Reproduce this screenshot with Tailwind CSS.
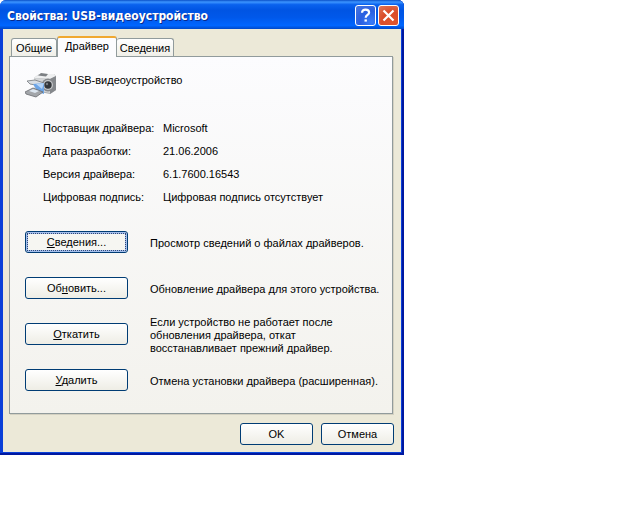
<!DOCTYPE html>
<html lang="ru">
<head>
<meta charset="utf-8">
<meta name="viewport" content="width=device-width, initial-scale=1">
<title>Свойства: USB-видеоустройство</title>
<script src="https://cdn.jsdelivr.net/npm/@tailwindcss/browser@4"></script>
</head>
<body class="bg-white text-black text-[11px] leading-[13px] font-['Liberation_Sans',Arial,sans-serif]">
<main role="dialog" aria-labelledby="title" class="w-full max-w-[404px] rounded-t-md bg-gradient-to-r from-[#0a3fd8] via-[#0a4fe0] to-[#0a3fd8] px-[3px] pb-[3px] shadow-[inset_0_-2px_0_#0018a0,inset_-2px_0_0_#0018a0]">
  <header class="-mx-[3px] flex h-[29px] items-center gap-[2px] rounded-t-md bg-[linear-gradient(to_bottom,#0a50c8_0%,#3c95ff_7%,#0a62ee_16%,#0054e3_35%,#0058ea_60%,#0066ff_88%,#0048c8_100%)] pt-[2px] pr-[5px] pl-[7px]">
    <h1 id="title" class="grow whitespace-nowrap font-['DejaVu_Sans_Condensed','DejaVu_Sans',sans-serif] text-[12px] leading-4 font-bold text-white [text-shadow:1px_1px_0_#0a2a8c]">Свойства: USB-видеоустройство</h1>
    <button type="button" aria-label="Справка" class="grid size-[21px] place-items-center rounded-[3px] border border-white bg-[radial-gradient(circle_at_80%_85%,#3a7cf8,#2a5fe0_50%,#4a78e0)]">
      <svg class="size-[17px]" viewBox="0 0 17 17" fill="none" stroke="#fff" stroke-width="2.2"><path d="M5 5.8C5 3.6 6.500 2.600 8.500 2.600S12.100 3.700 12.100 5.400C12.100 7.800 8.700 7.900 8.700 10.800"/><path d="M7.500 13.500h2.400"/></svg>
    </button>
    <button type="button" aria-label="Закрыть" class="grid size-[21px] place-items-center rounded-[3px] border border-white bg-[radial-gradient(circle_at_70%_85%,#e0552c,#da4d2a_50%,#e07858)]">
      <svg class="size-[17px]" viewBox="0 0 17 17" fill="none" stroke="#fff" stroke-width="2.2"><path d="M3.500 3.500l10 10M13.500 3.500l-10 10"/></svg>
    </button>
  </header>
  <div class="bg-[#ece9d8] px-[6px] pt-[7px] pb-[7px]">
    <div role="tablist" class="flex items-end pl-[2px]">
      <button type="button" role="tab" aria-selected="false" class="h-[18px] w-[46px] rounded-t-[3px] border border-b-0 border-[#919b9c] bg-gradient-to-b from-white to-[#f0efe8] pt-px text-center whitespace-nowrap">Общие</button>
      <button type="button" role="tab" aria-selected="true" class="relative z-10 -mb-px h-[21px] w-[60px] rounded-t-[3px] border border-t-2 border-b-0 border-[#919b9c] border-t-[#f0a830] bg-[#fcfcfe] pb-[3px] text-center whitespace-nowrap">Драйвер</button>
      <button type="button" role="tab" aria-selected="false" class="h-[18px] w-[57px] rounded-t-[3px] border border-b-0 border-l-0 border-[#919b9c] bg-gradient-to-b from-white to-[#f0efe8] pt-px text-center whitespace-nowrap">Сведения</button>
    </div>
    <section role="tabpanel" class="mr-[2px] border border-[#919b9c] bg-gradient-to-b from-[#fcfcfe] to-[#f3f2ed] px-[15px] pb-[10px] shadow-[1px_1px_0_#d4d1c2]">
      <div class="flex gap-3 pt-[15px]">
        <svg class="h-[27px] w-[32px] shrink-0" viewBox="0 0 32 27">
          <path d="M9 6l5-4 15 0 2 2v14l-6 4-15-3z" fill="#a9abae"/>
          <path d="M9 6l5-4 15 0 2 2-6 3z" fill="#eeeff0"/>
          <path d="M9 6l16 1v14l-15-3z" fill="#d3d5d7"/>
          <path d="M31 4v14l-6 4V7z" fill="#85888c"/>
          <path d="M13 3.500l3-2.500 7 1-2 2.500z" fill="#7d8084"/>
          <circle cx="23" cy="13" r="6.500" fill="#85888c"/>
          <circle cx="23" cy="13" r="5" fill="#c5c7c9"/>
          <circle cx="23" cy="13" r="3.700" fill="#33363a"/>
          <circle cx="22" cy="12" r="1.200" fill="#777b80"/>
          <path d="M2 9l8-1 9 3-3 3-11-2z" fill="#d9dee3" stroke="#74777b" stroke-width=".8"/>
          <path d="M8 12l11-1 0 11-6-2z" fill="#6da5e6"/>
          <path d="M11 12l8-1-2 6z" fill="#b7d5f7"/>
          <path d="M0 20l8-4 10 4-7 5-10-3z" fill="#a3a6aa" stroke="#696c70" stroke-width=".8"/>
          <path d="M4 19l4-2 6 2-4 2z" fill="#dce6f0"/>
        </svg>
        <h2 class="pt-[2px]">USB-видеоустройство</h2>
      </div>
      <dl class="mt-[18px] grid auto-rows-[23px] grid-cols-[120px_1fr] items-center pl-[18px] whitespace-nowrap">
        <dt>Поставщик драйвера:</dt><dd>Microsoft</dd>
        <dt>Дата разработки:</dt><dd>21.06.2006</dd>
        <dt>Версия драйвера:</dt><dd>6.1.7600.16543</dd>
        <dt>Цифровая подпись:</dt><dd>Цифровая подпись отсутствует</dd>
      </dl>
      <div class="mt-[10px] grid auto-rows-[46px] grid-cols-[103px_1fr] items-center gap-x-[22px]">
        <button type="button" aria-describedby="d1" class="h-[22px] rounded-[3px] border border-[#003c74] bg-[#f6f6f2] shadow-[inset_0_0_0_2px_#a5bfec]"><span class="m-px block h-[18px] border border-dotted border-[#304878] leading-[17px]"><u>С</u>ведения...</span></button>
        <p id="d1" class="pt-[3px]">Просмотр сведений о файлах драйверов.</p>
        <button type="button" aria-describedby="d2" class="h-[22px] rounded-[3px] border border-[#003c74] bg-gradient-to-b from-white to-[#eeede5]">Об<u>н</u>овить...</button>
        <p id="d2" class="pt-[3px] whitespace-nowrap">Обновление драйвера для этого устройства.</p>
        <button type="button" aria-describedby="d3" class="h-[22px] rounded-[3px] border border-[#003c74] bg-gradient-to-b from-white to-[#eeede5]"><u>О</u>ткатить</button>
        <p id="d3" class="pt-[3px]">Если устройство не работает после<br>обновления драйвера, откат<br>восстанавливает прежний драйвер.</p>
        <button type="button" aria-describedby="d4" class="h-[22px] rounded-[3px] border border-[#003c74] bg-gradient-to-b from-white to-[#eeede5]"><u>У</u>далить</button>
        <p id="d4" class="pt-[3px] whitespace-nowrap">Отмена установки драйвера (расширенная).</p>
      </div>
    </section>
    <footer class="mt-[9px] mr-px flex justify-end gap-2">
      <button type="button" class="h-[22px] w-[73px] rounded-[3px] border border-[#003c74] bg-gradient-to-b from-white to-[#eeede5]">OK</button>
      <button type="button" class="h-[22px] w-[73px] rounded-[3px] border border-[#003c74] bg-gradient-to-b from-white to-[#eeede5]">Отмена</button>
    </footer>
  </div>
</main>
</body>
</html>
